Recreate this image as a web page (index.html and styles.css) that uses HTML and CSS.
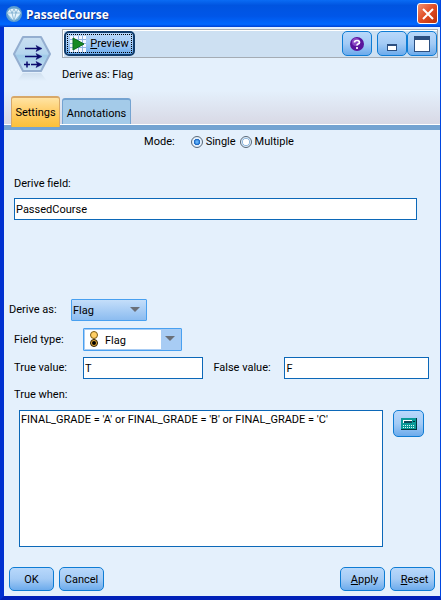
FILE: index.html
```
<!DOCTYPE html>
<html lang="en">
<head>
    <meta charset="UTF-8">
    <meta name="viewport" content="width=device-width, initial-scale=1.0">
    <title>PassedCourse</title>
    <link rel="stylesheet" href="styles.css">
</head>
<body>
    <form class="window">
        <div class="title-bar">
            <svg class="title-icon" width="16" height="16" viewBox="0 0 16 16">
                <circle cx="8" cy="8" r="8" fill="#5f9fd0"/>
                <circle cx="8" cy="8" r="6" fill="#8fbfe0"/>
                <path d="M4 3h8l3 4-7 8-7-8z" fill="#e4f4fc"/>
                <path d="M1 7h14M4 3l2 4 2 8 2-8 2-4M6 7l2-4 2 4" fill="none" stroke="#6fa4c8" stroke-width="0.7"/>
            </svg>
            <h1>PassedCourse</h1>
            <button type="button" class="close-button" aria-label="Close">
                <svg width="12" height="12" viewBox="0 0 12 12">
                    <path d="M1 1l10 10M11 1L1 11" stroke="#fff" stroke-width="2"/>
                </svg>
            </button>
        </div>

        <div class="header">
            <svg class="node-icon" width="38" height="54" viewBox="0 0 38 54">
                <defs>
                    <linearGradient id="hex" x1="0" y1="0" x2="0" y2="1">
                        <stop offset="0" stop-color="#c9dff2"/>
                        <stop offset="0.5" stop-color="#b4d5ee"/>
                        <stop offset="0.55" stop-color="#9fcae8"/>
                        <stop offset="1" stop-color="#c8e2f4"/>
                    </linearGradient>
                    <linearGradient id="mirror" x1="0" y1="0" x2="0" y2="1">
                        <stop offset="0" stop-color="#c3d5e6"/>
                        <stop offset="1" stop-color="#e4f0fc"/>
                    </linearGradient>
                </defs>
                <path d="M10 37h18l6 8H4z" fill="url(#mirror)" opacity="0.6"/>
                <path d="M10 1h18l9 17-9 17H10L1 18z" fill="url(#hex)" stroke="#94aed0" stroke-width="2" stroke-linejoin="round"/>
                <path d="M12 12.500h15M12 20.500h15M18 28.500h9M11 28.500h6M14 25.500v6" fill="none" stroke="#0a0a6c" stroke-width="1.500"/>
                <path d="M23 9.500l6 3-6 3 1.500-3zM23 17.500l6 3-6 3 1.500-3zM23 25.500l6 3-6 3 1.500-3z" fill="#0a0a6c" stroke="#0a0a6c" stroke-width="0.500"/>
            </svg>
            <div class="header-main">
                <div class="toolbar">
                    <button type="button" class="button preview-button">
                        <svg width="16" height="16" viewBox="0 0 16 16">
                            <path d="M0 0h16v16H0z" fill="#f4f8ff"/>
                            <path d="M0 3.500h16M0 7.500h16M0 11.500h16M3.500 0v16M8.500 0v16M12.500 0v16" stroke="#92b4e0"/>
                            <path d="M3 2l11 6-11 6z" fill="#178a24" stroke="#0c6a1a"/>
                        </svg>
                        <span><u>P</u>review</span>
                    </button>
                    <button type="button" class="button tool-button help-button" aria-label="Help">
                        <svg width="14" height="14" viewBox="0 0 14 14">
                            <circle cx="7" cy="7" r="7" fill="#5a149c"/>
                            <circle cx="6" cy="5" r="4" fill="#8a48c4"/>
                            <path d="M4.500 5.500q0-2 2.500-2t2.500 2q0 1-1.500 1.500-1 .5-1 1.500M7 10v2" fill="none" stroke="#fff" stroke-width="1.700"/>
                        </svg>
                    </button>
                    <button type="button" class="button tool-button" aria-label="Minimize">
                        <svg width="16" height="16" viewBox="0 0 16 16">
                            <path d="M3 8h10v7H3z" fill="#2c4f80"/>
                            <path d="M4 10h8v4H4z" fill="#fff"/>
                        </svg>
                    </button>
                    <button type="button" class="button tool-button" aria-label="Maximize">
                        <svg width="16" height="16" viewBox="0 0 16 16">
                            <path d="M0 0h16v16H0z" fill="#2c4f80"/>
                            <path d="M1 4h14v11H1z" fill="#fff"/>
                        </svg>
                    </button>
                </div>
                <p class="summary">Derive as: Flag</p>
            </div>
            <div class="tabs" role="tablist">
                <button type="button" class="tab active" role="tab" aria-selected="true">Settings</button>
                <button type="button" class="tab" role="tab" aria-selected="false">Annotations</button>
            </div>
        </div>

        <div class="panel">
            <div class="mode-row" role="radiogroup" aria-labelledby="mode-label">
                <span id="mode-label" class="mode-label">Mode:</span>
                <label><input type="radio" name="mode" value="single" checked>Single</label>
                <label><input type="radio" name="mode" value="multiple">Multiple</label>
            </div>

            <div class="derive-field">
                <label for="derive-field">Derive field:</label>
                <input type="text" id="derive-field" value="PassedCourse">
            </div>

            <div class="derive-row">
                <label for="derive-as">Derive as:</label>
                <span class="select-box derive-select">
                    <select id="derive-as"><option>Flag</option></select>
                    <svg class="arrow" width="10" height="5" viewBox="0 0 10 5"><path d="M0 0h10L5 5z" fill="#6a6f78"/></svg>
                </span>
            </div>

            <div class="form-row type-row">
                <label for="field-type">Field type:</label>
                <span class="select-box type-select">
                    <select id="field-type"><option>Flag</option></select>
                    <svg class="flag-icon" width="10" height="16" viewBox="0 0 10 16">
                        <circle cx="5" cy="4" r="3.500" fill="#ffcf66" stroke="#7a5a10"/>
                        <circle cx="5" cy="12" r="3.500" fill="#e8ac38" stroke="#2c1c00"/>
                        <circle cx="5" cy="12" r="2" fill="#000"/>
                    </svg>
                    <svg class="arrow" width="10" height="5" viewBox="0 0 10 5"><path d="M0 0h10L5 5z" fill="#6a6f78"/></svg>
                </span>
            </div>

            <div class="form-row value-row">
                <label for="true-value">True value:</label>
                <input type="text" id="true-value" value="T">
                <label for="false-value">False value:</label>
                <input type="text" id="false-value" value="F">
            </div>

            <label class="when-label" for="true-when">True when:</label>
            <div class="when-row">
                <textarea id="true-when" spellcheck="false">FINAL_GRADE = 'A' or FINAL_GRADE = 'B' or FINAL_GRADE = 'C'</textarea>
                <button type="button" class="button calc-button" aria-label="Expression Builder">
                    <svg width="16" height="12" viewBox="0 0 16 12">
                        <path d="M0 0h16v12H0z" fill="#04343c"/>
                        <path d="M0 0h15v11H0z" fill="#0a9a98"/>
                        <path d="M2 2h9v3H2z" fill="#fff"/>
                        <path d="M3 3h8v2H3z" fill="#0c4858"/>
                        <path d="M2 7.500h11M2 9.500h11" stroke="#d8f8f4" stroke-dasharray="1 1"/>
                        <path d="M12 3.500h2" stroke="#04343c"/>
                    </svg>
                </button>
            </div>
        </div>

        <div class="footer">
            <button type="submit" class="button">OK</button>
            <button type="button" class="button">Cancel</button>
            <button type="button" class="button apply-button"><span><u>A</u>pply</span></button>
            <button type="reset" class="button reset-button"><span><u>R</u>eset</span></button>
        </div>
    </form>
</body>
</html>
```
FILE: styles.css
```
* {
    box-sizing: border-box;
}

body {
    margin: 0;
    font-family: Roboto, Arial, sans-serif;
    font-size: 11px;
    line-height: 14px;
    color: #000;
}

button, input, select, textarea {
    font: inherit;
    color: inherit;
    margin: 0;
}

svg {
    display: block;
    flex: none;
}

.window {
    display: flex;
    flex-direction: column;
    min-height: 100vh;
    background: #e4f0fc;
    border: solid #0046e0;
    border-width: 0 1px 4px 4px;
    border-bottom-color: #0020b8;
    border-left-color: #0030d0;
}

/* Title bar */
.title-bar {
    display: flex;
    align-items: center;
    height: 27px;
    margin-left: -4px;
    padding: 0 2px 0 6px;
    background: linear-gradient(#0a6cf4, #0054e0 20%, #0056e8 60%, #0068ff 90%, #0040d0);
}

.title-bar h1 {
    flex: 1;
    margin: 2px 0 0 4px;
    font-family: "Open Sans", sans-serif;
    font-size: 12px;
    font-weight: bold;
    color: #fff;
    text-shadow: 1px 1px 0 #0c2a80;
}

.close-button {
    display: flex;
    align-items: center;
    justify-content: center;
    width: 21px;
    height: 21px;
    padding: 0;
    border: 1px solid #fff;
    border-radius: 3px;
    background: linear-gradient(135deg, #f09070, #e04c24 50%, #b83008);
}

/* Buttons */
.button {
    display: flex;
    align-items: center;
    justify-content: center;
    width: 45px;
    height: 24px;
    padding: 2px 0 0;
    border: 1px solid #0e7cd4;
    border-radius: 5px;
    background: linear-gradient(#b8d8fb, #a4cbf5 50%, #6cabec);
}

/* Header */
.header {
    display: grid;
    grid-template-columns: 58px 1fr;
    padding-top: 2px;
    background: linear-gradient(#e4f0fc 65%, #d8d8e4);
    border-bottom: 5px solid #74a3d1;
}

.node-icon {
    margin: 7px 0 0 9px;
}

.toolbar {
    display: flex;
    height: 29px;
    margin-right: 2px;
    padding: 1px 0;
    background: #cde0f2;
    border: 1px solid #a4acb4;
    box-shadow: inset 1px 1px 0 #fff;
}

.preview-button {
    position: relative;
    gap: 4px;
    width: 71px;
    margin-left: 1px;
    border: 2px solid #103c6c;
}

.preview-button::after {
    content: "";
    position: absolute;
    inset: 1px;
    border: 1px dotted #000;
}

.tool-button {
    width: 30px;
}

.toolbar .button {
    height: 25px;
    padding: 0;
}

.help-button {
    margin: 0 5px 0 auto;
}

.summary {
    margin: 10px 0 0;
}

.tabs {
    grid-column: 1 / -1;
    display: flex;
    align-items: flex-end;
    gap: 2px;
    height: 29px;
    margin-top: 6px;
    padding-left: 7px;
    border-bottom: 1px solid #fff;
}

.tab {
    width: 69px;
    height: 26px;
    padding: 4px 0 0;
    border: 1px solid #74a3d1;
    border-width: 2px 1px 0;
    border-radius: 3px 3px 0 0;
    background: #a4cbe9;
}

.tab.active {
    width: 49px;
    height: 31px;
    margin-bottom: -3px;
    padding: 0;
    border-color: #d8a868;
    background: linear-gradient(#ffe4a4, #ffd070 40%, #fcc038);
}

/* Settings panel */
.panel {
    flex: 1;
    display: flex;
    flex-direction: column;
    padding: 5px 11px 0 5px;
}

.mode-row {
    display: flex;
    align-items: center;
    justify-content: center;
    gap: 4px;
}

.mode-label {
    margin-right: 12px;
}

.mode-row label {
    display: flex;
    align-items: center;
    gap: 3px;
}

input[type="radio"] {
    appearance: none;
    width: 12px;
    height: 12px;
    border: 1px solid #586878;
    border-radius: 50%;
    background: radial-gradient(#fff 40%, #90b8dc 50%, #e4f0fc 65%);
}

input[type="radio"]:checked {
    background: radial-gradient(#60b0f8 15%, #1060c0 40%, #e4f0fc 50%);
}

input[type="text"], textarea {
    min-width: 0;
    border: 1px solid #0c68b8;
    border-radius: 0;
    background: #fff;
}

input[type="text"] {
    height: 22px;
    padding: 0 1px;
}

.derive-field {
    display: flex;
    flex-direction: column;
    gap: 7px;
    margin: 28px 12px 79px 5px;
}

.derive-row {
    display: flex;
    align-items: center;
}

.derive-row label {
    width: 62px;
}

.form-row {
    display: flex;
    align-items: center;
    margin-left: 5px;
}

.form-row label:first-child {
    width: 69px;
}

.type-row {
    margin-top: 7px;
}

.value-row {
    margin-top: 6px;
}

.value-row input {
    flex: 120;
}

.value-row label + input ~ input {
    flex: 145;
}

.value-row input + label {
    width: 71px;
    margin-left: 10px;
}

/* Drop-downs */
.select-box {
    position: relative;
}

.select-box select {
    display: block;
    appearance: none;
    width: 100%;
    height: 22px;
    padding: 2px 1px 0;
    border: 1px solid #48a0f0;
    border-radius: 1px;
    background: linear-gradient(#c4defa, #8cbcf0);
}

.derive-select {
    width: 76px;
}

.type-select {
    width: 99px;
}

.type-select select {
    height: 23px;
    padding-left: 21px;
    background: linear-gradient(#fff, #fff) 1px 1px / 76px 19px no-repeat, #a8ccf4;
}

.arrow {
    position: absolute;
    top: 8px;
    right: 7px;
    pointer-events: none;
}

.flag-icon {
    position: absolute;
    top: 3px;
    left: 6px;
    pointer-events: none;
}

.when-label {
    margin: 9px 5px 8px;
}

.when-row {
    flex: 1;
    display: flex;
    gap: 10px;
    margin: 0 5px 0 10px;
}

.when-row textarea {
    flex: 1;
    padding: 2px 1px;
    resize: none;
}

.calc-button {
    width: 31px;
    height: 27px;
    padding: 0;
}

/* Footer */
.footer {
    display: flex;
    gap: 5px;
    padding: 20px 5px 5px;
}

.apply-button {
    margin-left: auto;
}

.apply-button, .reset-button {
    padding-left: 4px;
}
```
